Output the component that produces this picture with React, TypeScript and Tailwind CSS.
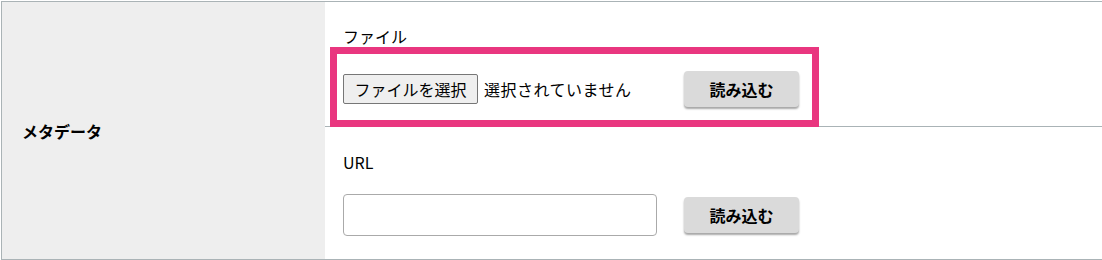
import React from 'react';

const font = { fontFamily: '"Noto Sans CJK JP", "Noto Sans", sans-serif' };

const LoadButton: React.FC = () => (
  <button
    type="button"
    className="h-[36px] w-[115px] rounded-[4px] bg-[#dadada] text-[16px] font-bold text-black shadow-[0_2px_2px_rgba(0,0,0,0.35)]"
  >
    読み込む
  </button>
);

export default function App() {
  return (
    <div className="h-[260px] w-[1102px] bg-white pl-px pt-px" style={font}>
      <div className="flex h-[259px] border-y border-l border-[#aab3b6]">
        {/* label column */}
        <div className="flex w-[323px] shrink-0 items-center bg-[#eeeeee] pl-[20px]">
          <span className="text-[16px] font-bold leading-6 text-black">メタデータ</span>
        </div>

        {/* fields column */}
        <div className="flex flex-1 flex-col">
          {/* file row */}
          <div className="relative h-[125px] border-b border-[#aab3b6] px-[18px] pt-[22px]">
            <div className="text-[16px] leading-6 text-black">ファイル</div>
            <div className="mt-[20px] flex h-[42px] items-center gap-[27px]">
              <div className="flex w-[314px] items-center gap-[6px]">
                <span className="flex h-[30px] w-[135px] items-center justify-center rounded-[2px] border border-[#767676] bg-[#efefef] text-[16px] text-black">
                  ファイルを選択
                </span>
                <span className="text-[16px] tracking-[0.5px] text-black">選択されていません</span>
              </div>
              <LoadButton />
            </div>
            {/* highlight annotation */}
            <div className="pointer-events-none absolute left-[5px] top-[45px] h-[80px] w-[489px] border-[7px] border-[#e9367f]" />
          </div>

          {/* url row */}
          <div className="flex-1 px-[18px] pt-[23px]">
            <div className="text-[16px] leading-6 text-black">URL</div>
            <div className="mt-[20px] flex h-[42px] items-center gap-[27px]">
              <input
                type="text"
                className="h-[42px] w-[314px] rounded-[4px] border border-[#aaaaaa] bg-white px-2 text-[16px] outline-none"
              />
              <LoadButton />
            </div>
          </div>
        </div>
      </div>
    </div>
  );
}
